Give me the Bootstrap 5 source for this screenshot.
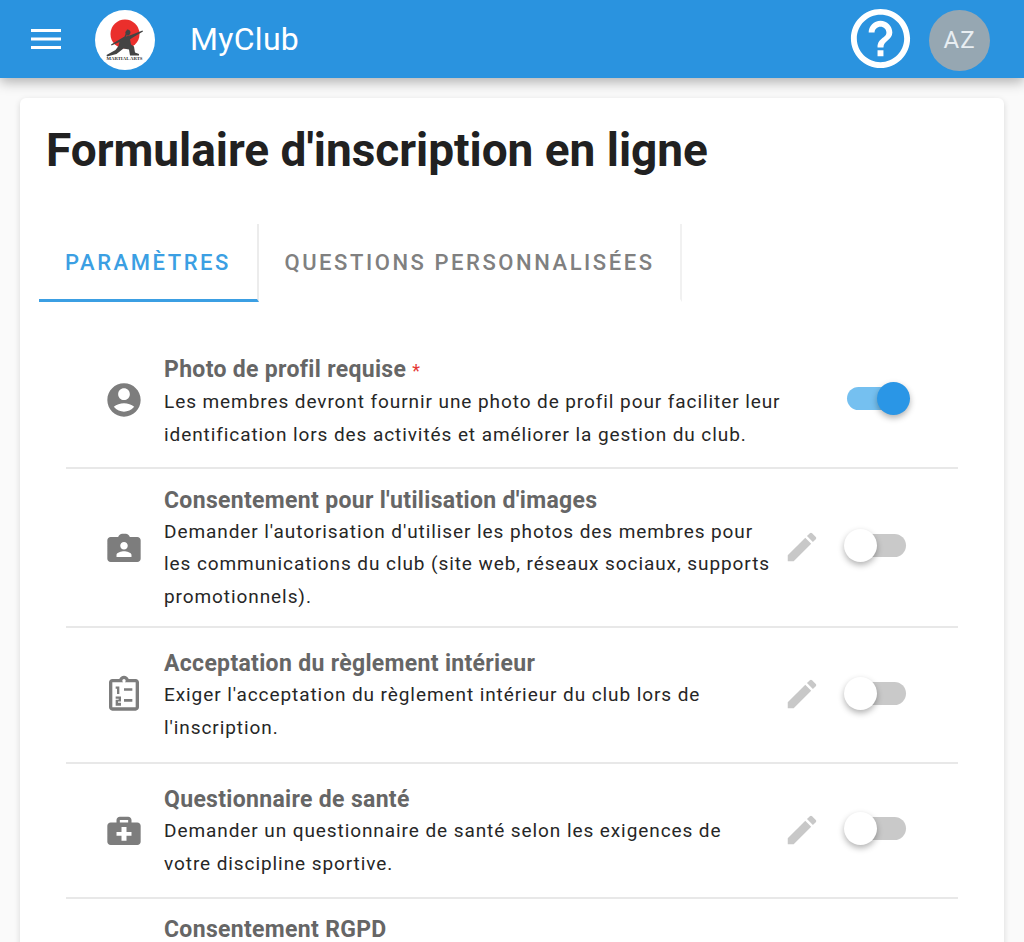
<!DOCTYPE html>
<html lang="fr">
<head>
<meta charset="utf-8">
<title>MyClub</title>
<link href="https://cdn.jsdelivr.net/npm/bootstrap@5.3.0/dist/css/bootstrap.min.css" rel="stylesheet">
<style>
html,body{height:942px;overflow:hidden}
body{font-family:Roboto,sans-serif;background:#fafafa;color:#212121}
.topbar{height:78px;background:#2a93df;padding:2px 34px 0 31px;box-shadow:0 4px 12px rgba(0,0,0,.3);position:relative;z-index:2}
.burger{width:30px;height:20px;display:block;margin-top:-2px}
.logo-disc{width:60px;height:60px;border-radius:50%;background:#fff;margin-left:34px;flex:none}
.brand-name{font-size:32px;color:#fff;margin-left:35px;line-height:1;letter-spacing:.3px;margin-top:-2px}
.help-ico{width:71px;height:71px;display:block;margin-right:13px;margin-top:-3px}
.avatar-disc{width:61px;height:61px;border-radius:50%;background:#96a7b2;color:#e8eef2;font-size:24px;letter-spacing:1px}
.sheet{margin:20px 20px 0;height:900px;background:#fff;border-radius:6px;box-shadow:0 2px 6px rgba(0,0,0,.14);padding:26px 46px 0 19px}
.page-title{font-size:46px;font-weight:700;line-height:52px;margin:0 0 0 7px;padding:0;letter-spacing:-.03px;color:#212121}
.tabbar{margin-top:48px;height:78px}
.tabitem{height:78px;padding-top:2px;font-size:22px;font-weight:500;letter-spacing:2.55px;color:#808080;border-right:2px solid #f1f1f1;border-bottom:3px solid transparent}
.tab-one{width:220px;color:#3b9fe3;border-bottom-color:#3b9fe3;border-right-color:#ececec}
.tab-two{width:423px}
.opt-list{margin:43px 0 0 27px}
.opt{border-bottom:2px solid #e8e8e8;align-items:center}
.opt-a{height:124px;padding-bottom:10px}.opt-b{height:159px}.opt-c{height:136px}.opt-d{height:135px}
.opt-ico{width:40px;height:40px;margin:-2px 20px 0 38px;flex:none;fill:#7d7d7d}
.opt-body{width:608.5px;flex:none;margin-top:4px}
.opt-a .opt-body{width:650px}
.opt-name{font-size:23px;font-weight:700;color:#666;line-height:30px;letter-spacing:.32px}
.req{color:#e53935;font-weight:400;font-size:18px}
.opt-text{font-size:19px;line-height:32.6px;letter-spacing:.92px;color:#262626}
.pen{width:38px;height:38px;fill:#c8c8c8;flex:none;margin:-2px 0 0 10.500px}
.sw{position:relative;width:59px;height:23px;border-radius:12px;background:#c9c9c9;flex:none;margin:-4px 0 0 26px}
.sw::after{content:"";position:absolute;left:-3px;top:-5px;width:33px;height:33px;border-radius:50%;background:#fff;box-shadow:0 3px 6px rgba(0,0,0,.3)}
.sw-on{background:#75c0f0;margin:-5px 0 0 33px}
.sw-on::after{left:30px;background:#2a96e6}
.opt-last{padding-top:16px}
.opt-last .opt-name{margin-left:98px}
</style>
</head>
<body>
<nav class="topbar d-flex align-items-center">
  <svg class="burger" viewBox="0 0 30 20"><path fill="#fff" d="M0 0h30v3H0zM0 8.500h30v3H0zM0 17h30v3H0z"/></svg>
  <div class="logo-disc d-flex align-items-center justify-content-center">
    <svg width="60" height="60" viewBox="0 0 60 60">
      <circle cx="30" cy="24" r="14.500" fill="#ea2f2c"/>
      <path fill="#444" d="M32 19.500a3 3 0 1 1-.5 5.800l-.5 1.200 5-1.500 11.500-4.500.5 1-11 6.500-2 1.500 1 5 3 2 1 6 4 1.500v1.500h-9l-1-6-5.500-1-7 5.500-9.500 2.500-.5-1.500 9-5 3-4 1-4-8 3.500-.5-1 8.500-5 5-3 1-2.500a3 3 0 0 1 1-3.500z"/>
      <text x="11.500" y="50" textLength="36" lengthAdjust="spacingAndGlyphs" font-family="Liberation Serif,serif" font-size="5" font-weight="700" fill="#333">MARTIAL ARTS</text>
    </svg>
  </div>
  <span class="brand-name">MyClub</span>
  <svg class="help-ico ms-auto" viewBox="0 0 24 24"><path fill="#fff" d="M11 18h2v-2h-2v2zm1-16C6.480 2 2 6.480 2 12s4.480 10 10 10 10-4.480 10-10S17.520 2 12 2zm0 18c-4.410 0-8-3.590-8-8s3.590-8 8-8 8 3.590 8 8-3.590 8-8 8zm0-14c-2.210 0-4 1.790-4 4h2c0-1.100.9-2 2-2s2 .9 2 2c0 2-3 1.750-3 5h2c0-2.250 3-2.500 3-5 0-2.210-1.790-4-4-4z"/></svg>
  <div class="avatar-disc d-flex align-items-center justify-content-center">AZ</div>
</nav>
<main class="sheet">
  <h1 class="page-title">Formulaire d'inscription en ligne</h1>
  <div class="tabbar d-flex">
    <div class="tabitem tab-one d-flex align-items-center justify-content-center">PARAMÈTRES</div>
    <div class="tabitem tab-two d-flex align-items-center justify-content-center">QUESTIONS PERSONNALISÉES</div>
  </div>
  <div class="opt-list">
    <div class="opt opt-a d-flex">
      <svg class="opt-ico" viewBox="0 0 24 24"><path d="M12 2C6.480 2 2 6.480 2 12s4.480 10 10 10 10-4.480 10-10S17.520 2 12 2zm0 3c1.930 0 3.500 1.570 3.500 3.500S13.930 12 12 12s-3.500-1.570-3.500-3.500S10.070 5 12 5zm0 14c-2.030 0-4.430-.82-6.140-2.880C7.550 14.800 9.680 14 12 14s4.450.8 6.140 2.120C16.430 18.180 14.030 19 12 19z"/></svg>
      <div class="opt-body">
        <div class="opt-name">Photo de profil requise <span class="req">*</span></div>
        <div class="opt-text">Les membres devront fournir une photo de profil pour faciliter leur identification lors des activités et améliorer la gestion du club.</div>
      </div>
      <div class="sw sw-on"></div>
    </div>
    <div class="opt opt-b d-flex">
      <svg class="opt-ico" viewBox="0 0 24 24"><path d="M20 6h-4.500c-.3-1.200-1.400-2-2.500-2h-2c-1.100 0-2.200.8-2.500 2H4c-1.100 0-2 .9-2 2v11c0 1.100.9 2 2 2h16c1.100 0 2-.9 2-2V8c0-1.100-.9-2-2-2zm-8 3c1.240 0 2.250 1.010 2.250 2.250S13.240 13.500 12 13.500s-2.250-1.010-2.250-2.250S10.760 9 12 9zm4.500 9h-9v-1.130c0-1.500 3-2.250 4.500-2.250s4.500.75 4.500 2.250V18z"/></svg>
      <div class="opt-body">
        <div class="opt-name">Consentement pour l'utilisation d'images</div>
        <div class="opt-text">Demander l'autorisation d'utiliser les photos des membres pour les communications du club (site web, réseaux sociaux, supports promotionnels).</div>
      </div>
      <svg class="pen" viewBox="0 0 24 24"><path d="M3 21v-3.750L14.060 6.190l3.750 3.750L6.750 21H3zM20.710 7.040a1 1 0 0 0 0-1.410l-2.340-2.340a1 1 0 0 0-1.410 0l-1.830 1.830 3.750 3.750 1.830-1.830z"/></svg>
      <div class="sw"></div>
    </div>
    <div class="opt opt-c d-flex">
      <svg class="opt-ico" viewBox="0 0 24 24"><path fill-rule="evenodd" d="M19 3h-4.180C14.400 1.840 13.300 1 12 1s-2.400.84-2.820 2H5c-1.100 0-2 .9-2 2v15c0 1.100.9 2 2 2h14c1.100 0 2-.9 2-2V5c0-1.100-.9-2-2-2zm-7 0c.55 0 1 .45 1 1s-.45 1-1 1-1-.45-1-1 .45-1 1-1zM5 5h14v15H5zm7 3.500h5v1.600h-5zm0 6.500h5v1.600h-5zM7 7.500h2.200V12H7.800V8.900H7zm0 6h3.200v3H8.400v.8h1.800V19H7v-3.500h1.800v-.7H7z"/></svg>
      <div class="opt-body">
        <div class="opt-name">Acceptation du règlement intérieur</div>
        <div class="opt-text">Exiger l'acceptation du règlement intérieur du club lors de l'inscription.</div>
      </div>
      <svg class="pen" viewBox="0 0 24 24"><path d="M3 21v-3.750L14.060 6.190l3.750 3.750L6.750 21H3zM20.710 7.040a1 1 0 0 0 0-1.410l-2.340-2.340a1 1 0 0 0-1.410 0l-1.830 1.830 3.750 3.750 1.830-1.830z"/></svg>
      <div class="sw"></div>
    </div>
    <div class="opt opt-d d-flex">
      <svg class="opt-ico" viewBox="0 0 24 24"><path fill-rule="evenodd" d="M20 7.500h-3.500V6c0-1.100-.9-2-2-2h-5c-1.100 0-2 .9-2 2v1.500H4c-1.100 0-2 .9-2 2V19c0 1.100.9 2 2 2h16c1.100 0 2-.9 2-2V9.500c0-1.100-.9-2-2-2zM9.500 6h5v1.500h-5zM16.500 15.500h-3v3h-3v-3h-3v-2.300h3v-3h3v3h3z"/></svg>
      <div class="opt-body">
        <div class="opt-name">Questionnaire de santé</div>
        <div class="opt-text">Demander un questionnaire de santé selon les exigences de votre discipline sportive.</div>
      </div>
      <svg class="pen" viewBox="0 0 24 24"><path d="M3 21v-3.750L14.060 6.190l3.750 3.750L6.750 21H3zM20.710 7.040a1 1 0 0 0 0-1.410l-2.340-2.340a1 1 0 0 0-1.410 0l-1.830 1.830 3.750 3.750 1.830-1.830z"/></svg>
      <div class="sw"></div>
    </div>
    <div class="opt-last d-flex">
      <div class="opt-name">Consentement RGPD</div>
    </div>
  </div>
</main>
<script src="https://cdn.jsdelivr.net/npm/bootstrap@5.3.0/dist/js/bootstrap.bundle.min.js"></script>
</body>
</html>
